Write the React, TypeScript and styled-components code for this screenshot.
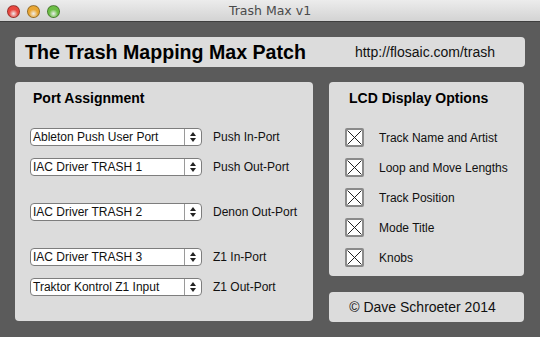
import React from 'react';
import styled, {createGlobalStyle} from 'styled-components';

const GlobalStyle = createGlobalStyle`
	html, body {
		margin: 0;
		padding: 0;
		background: #5b5b5b;
	}
	#root {
		width: 540px;
		height: 337px;
		overflow: hidden;
	}
`;

const Window = styled.div`
	width: 540px;
	height: 337px;
	display: flex;
	flex-direction: column;
	background: #5b5b5b;
	font-family: "Liberation Sans", Arial, sans-serif;
	color: #111;
`;

const TitleBar = styled.div`
	height: 21px;
	flex: 0 0 21px;
	position: relative;
	display: flex;
	align-items: center;
	justify-content: center;
	background: linear-gradient(#ececec, #d3d3d3);
	border-bottom: 1px solid #3e3e3e;
`;

const WindowTitle = styled.div`
	font-family: "DejaVu Sans", "Liberation Sans", sans-serif;
	font-size: 12.5px;
	color: #4a4a4a;
`;

const Lights = styled.div`
	position: absolute;
	left: 7px;
	top: 5px;
	display: flex;
	gap: 7px;
`;

const Light = styled.span<{ $color: string }>`
	width: 13px;
	height: 13px;
	border-radius: 50%;
	box-sizing: border-box;
	border: 1px solid rgba(0, 0, 0, 0.35);
	background: radial-gradient(circle at 50% 70%, #fff8 0, ${p => p.$color} 45%, ${p => p.$color} 100%);
`;

const Content = styled.div`
	flex: 1;
	padding: 15px 15px 0 15px;
	display: flex;
	flex-direction: column;
	gap: 15px;
`;

const Header = styled.div`
	height: 30px;
	box-sizing: border-box;
	background: #dcdcdc;
	border-radius: 4px;
	display: flex;
	align-items: center;
	justify-content: space-between;
	padding: 0 30px 0 10px;
`;

const HeaderTitle = styled.h1`
	margin: 0;
	font-size: 19.6px;
	font-weight: bold;
	color: #000;
`;

const HeaderUrl = styled.span`
	font-size: 14px;
	color: #111;
`;

const Columns = styled.div`
	display: grid;
	grid-template-columns: 298px 195px;
	column-gap: 16px;
`;

const Panel = styled.div<{ $height: number; $padLeft: number }>`
	height: ${p => p.$height}px;
	box-sizing: border-box;
	background: #dcdcdc;
	border-radius: 4px;
	padding: 8px 0 0 ${p => p.$padLeft}px;
`;

const PanelTitle = styled.h2<{ $indent: number }>`
	margin: 0 0 22px ${p => p.$indent}px;
	font-size: 14px;
	line-height: 16px;
	font-weight: bold;
	color: #000;
`;

const RightColumn = styled.div`
	display: flex;
	flex-direction: column;
	gap: 16px;
`;

const PortRow = styled.div<{ $spaced?: boolean }>`
	display: flex;
	align-items: center;
	height: 18px;
	margin-top: ${p => (p.$spaced ? 27 : 12)}px;
	&:first-of-type {
		margin-top: 0;
	}
`;

const Select = styled.div`
	width: 172px;
	height: 18px;
	box-sizing: border-box;
	background: #fff;
	border: 1px solid #7d7d7d;
	border-radius: 4px;
	display: flex;
	align-items: center;
	margin-right: 11px;
`;

const SelectText = styled.span`
	flex: 1;
	padding-left: 2px;
	font-size: 12px;
	color: #111;
	white-space: nowrap;
	overflow: hidden;
`;

const SelectArrows = styled.span`
	width: 16px;
	height: 16px;
	border-left: 1px solid #9a9a9a;
	display: flex;
	align-items: center;
	justify-content: center;
`;

const PortLabel = styled.span`
	font-size: 12px;
	color: #111;
`;

const OptionRow = styled.div`
	display: flex;
	align-items: center;
	height: 19px;
	margin-bottom: 11px;
`;

const CheckBox = styled.span`
	width: 19px;
	height: 19px;
	box-sizing: border-box;
	border: 2px solid #8a8a8a;
	border-radius: 2px;
	background: #fff;
	display: flex;
	align-items: center;
	justify-content: center;
	margin-right: 15px;
`;

const OptionLabel = styled.span`
	font-size: 12px;
	color: #111;
`;

const Footer = styled.div`
	height: 30px;
	background: #dcdcdc;
	border-radius: 4px;
	display: flex;
	align-items: center;
	justify-content: center;
	padding-right: 8px;
	font-size: 14px;
	color: #111;
`;

const ports = [
	{value: 'Ableton Push User Port', label: 'Push In-Port'},
	{value: 'IAC Driver TRASH 1', label: 'Push Out-Port'},
	{value: 'IAC Driver TRASH 2', label: 'Denon Out-Port', spaced: true},
	{value: 'IAC Driver TRASH 3', label: 'Z1 In-Port', spaced: true},
	{value: 'Traktor Kontrol Z1 Input', label: 'Z1 Out-Port'},
];

const options = ['Track Name and Artist', 'Loop and Move Lengths', 'Track Position', 'Mode Title', 'Knobs'];

const Arrows = () => (
	<svg width="8" height="12" viewBox="0 0 8 12">
		<path d="M4 1 L7 5 L1 5 Z" fill="#222"/>
		<path d="M4 11 L7 7 L1 7 Z" fill="#222"/>
	</svg>
);

const Cross = () => (
	<svg width="15" height="15" viewBox="0 0 15 15">
		<path d="M0.5 0.5 L14.5 14.5 M14.5 0.5 L0.5 14.5" stroke="#222" strokeWidth="1"/>
	</svg>
);

const App = () => {
	return (
		<>
			<GlobalStyle/>
			<Window>
				<TitleBar>
					<Lights>
						<Light $color="#e8473f"/>
						<Light $color="#e9a632"/>
						<Light $color="#6cbe45"/>
					</Lights>
					<WindowTitle>Trash Max v1</WindowTitle>
				</TitleBar>
				<Content>
					<Header>
						<HeaderTitle>The Trash Mapping Max Patch</HeaderTitle>
						<HeaderUrl>http://flosaic.com/trash</HeaderUrl>
					</Header>
					<Columns>
						<Panel $height={239} $padLeft={15}>
							<PanelTitle $indent={3}>Port Assignment</PanelTitle>
							{
								ports.map(p => (
									<PortRow key={p.label} $spaced={p.spaced}>
										<Select>
											<SelectText>{p.value}</SelectText>
											<SelectArrows><Arrows/></SelectArrows>
										</Select>
										<PortLabel>{p.label}</PortLabel>
									</PortRow>
								))
							}
						</Panel>
						<RightColumn>
							<Panel $height={194} $padLeft={16}>
								<PanelTitle $indent={4}>LCD Display Options</PanelTitle>
								{
									options.map(o => (
										<OptionRow key={o}>
											<CheckBox><Cross/></CheckBox>
											<OptionLabel>{o}</OptionLabel>
										</OptionRow>
									))
								}
							</Panel>
							<Footer>© Dave Schroeter 2014</Footer>
						</RightColumn>
					</Columns>
				</Content>
			</Window>
		</>
	);
};

export default App;
